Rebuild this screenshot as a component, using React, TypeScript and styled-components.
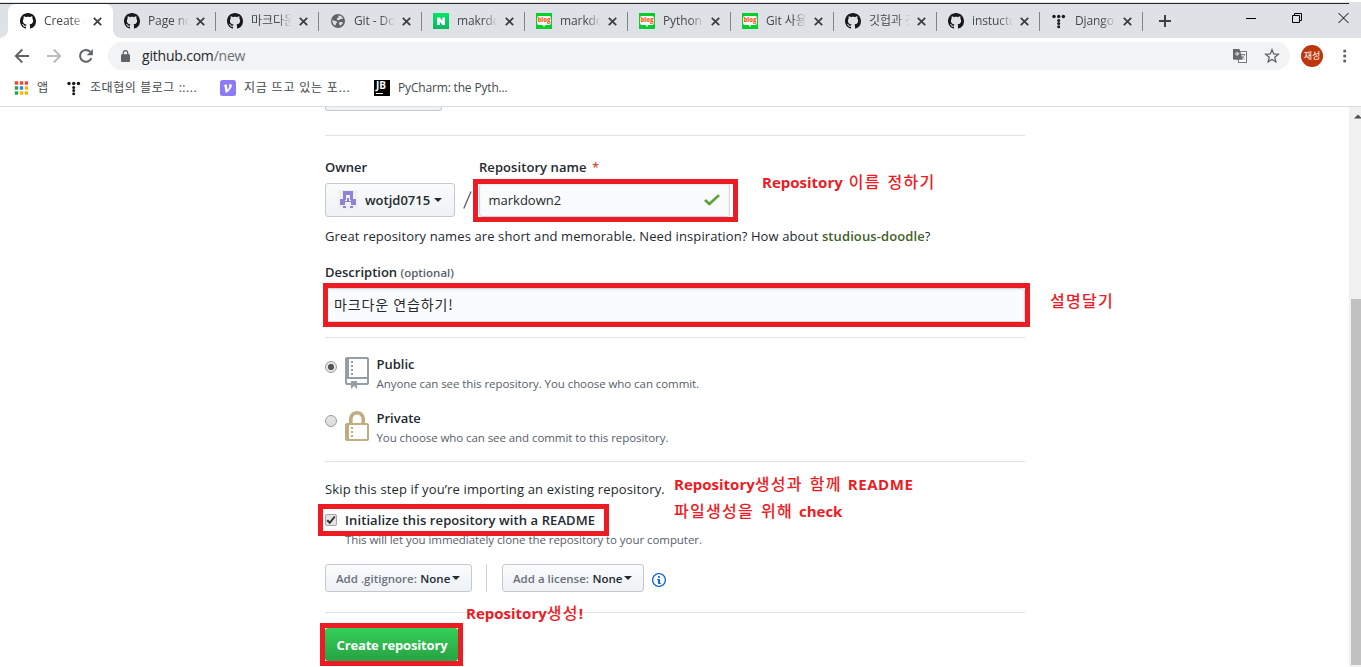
import React from "react";
import styled, { createGlobalStyle, css } from "styled-components";

const GlobalStyle = createGlobalStyle`
  * { box-sizing: border-box; }
  body {
    margin: 0;
    overflow: hidden;
    background: #fff;
    color: #24292e;
    font-family: "Open Sans", "Noto Sans CJK KR", sans-serif;
    font-size: 13px;
  }
  svg { display: block; flex: none; }
`;

/* ---------- browser chrome ---------- */

const Screen = styled.div`
  display: flex;
  flex-direction: column;
  width: 1361px;
  height: 667px;
  overflow: hidden;
`;

const WindowEdge = styled.div`
  flex: none;
  height: 4px;
  display: flex;
  align-items: flex-end;
  background: linear-gradient(#fff 0 2px, #dee1e6 2px);
  &::after {
    content: "";
    width: 1349px;
    height: 1px;
    background: #23272b;
  }
`;

const TabStrip = styled.div`
  flex: none;
  display: flex;
  height: 34px;
  padding-left: 8px;
  background: #dee1e6;
`;

const Tab = styled.div<{ $active?: boolean; $divider?: boolean }>`
  position: relative;
  display: flex;
  align-items: center;
  width: ${(p) => (p.$active ? 105 : 103)}px;
  padding: 0 8px 0 ${(p) => (p.$active ? 12 : 11)}px;
  ${(p) =>
    p.$active &&
    css`
      background: #fff;
      border-radius: 8px 8px 0 0;
      &::before,
      &::after {
        content: "";
        position: absolute;
        bottom: 0;
        width: 8px;
        height: 8px;
      }
      &::before {
        left: -8px;
        background: radial-gradient(circle at 0 0, transparent 7.5px, #fff 8px);
      }
      &::after {
        right: -8px;
        background: radial-gradient(circle at 100% 0, transparent 7.5px, #fff 8px);
      }
    `}
  ${(p) =>
    p.$divider &&
    css`
      background: linear-gradient(#808388, #808388) no-repeat right 8px / 1px 19px;
    `}
`;

const TabTitle = styled.span`
  flex: 1;
  margin-left: 8px;
  overflow: hidden;
  white-space: nowrap;
  font-size: 12px;
  line-height: 18px;
  letter-spacing: -0.1px;
  color: #45494d;
  mask-image: linear-gradient(90deg, #000 65%, transparent 100%);
`;

const TabClose = styled.span`
  display: flex;
  justify-content: center;
  flex: none;
  width: 16px;
  margin-left: 3px;
`;

const NewTab = styled.div`
  display: flex;
  align-items: center;
  margin-left: 16px;
`;

const WindowButtons = styled.div`
  display: flex;
  gap: 36px;
  margin: 9px 12px 0 auto;
`;

const Toolbar = styled.div`
  flex: none;
  display: flex;
  align-items: center;
  height: 36px;
  padding: 0 10px 0 14px;
`;

const NavButtons = styled.div`
  display: flex;
  gap: 16px;
  width: 94px;
`;

const Omnibox = styled.div`
  display: flex;
  align-items: center;
  width: 1182px;
  height: 28px;
  padding: 0 10px 0 13px;
  border-radius: 14px;
  background: #f1f3f4;
`;

const Url = styled.span`
  flex: 1;
  margin-left: 12px;
  font-size: 14px;
  line-height: 20px;
  letter-spacing: -0.2px;
  color: #25282b;
  span { color: #6c7074; }
`;

const OmniIcons = styled.div`
  display: flex;
  align-items: center;
  gap: 16px;
`;

const Avatar = styled.div`
  display: flex;
  align-items: center;
  justify-content: center;
  width: 22px;
  height: 22px;
  margin: 0 20px 0 11px;
  border-radius: 50%;
  background: #bf360c;
  color: #fff;
  font: 9px/12px "Noto Sans CJK KR", sans-serif;
`;

const Bookmarks = styled.div`
  flex: none;
  display: flex;
  align-items: center;
  height: 33px;
  padding: 0 0 5px 13px;
  border-bottom: 1px solid #dadce0;
`;

const BookmarkIcon = styled.span`
  display: flex;
  align-items: center;
  justify-content: center;
  width: 16px;
  height: 16px;
`;

const Bookmark = styled.div<{ $width: number; $ls?: number }>`
  display: flex;
  align-items: center;
  gap: 8px;
  width: ${(p) => p.$width}px;
  white-space: nowrap;
  font-size: 12px;
  line-height: 18px;
  letter-spacing: ${(p) => p.$ls ?? 0}px;
  color: #45494d;
`;

const JetBrains = styled.span`
  display: block;
  position: relative;
  width: 16px;
  height: 16px;
  padding-left: 2px;
  background: #000;
  color: #fff;
  font: bold 10px/11px "Open Sans", sans-serif;
  letter-spacing: 0;
  &::after {
    content: "";
    position: absolute;
    left: 2px;
    bottom: 2px;
    width: 7px;
    height: 1px;
    background: #fff;
  }
`;

const BlogMark = styled.span`
  display: flex;
  align-items: flex-start;
  justify-content: center;
  flex: none;
  position: relative;
  width: 16px;
  height: 16px;
  padding-top: 3px;
  background: #04cf2e;
  &::after {
    content: "";
    position: absolute;
    left: 6px;
    top: 11px;
    border: 2px solid transparent;
    border-top: 3px solid #fff;
  }
`;

const BlogBubble = styled.span`
  display: flex;
  justify-content: center;
  width: 14px;
  height: 9px;
  border-radius: 2px;
  background: #fff;
  color: #f4621f;
  font: 800 6px/8px "Open Sans", sans-serif;
  letter-spacing: -0.1px;
`;

/* ---------- page ---------- */

const Viewport = styled.div`
  flex: 1;
  display: flex;
  min-height: 0;
`;

const Page = styled.main`
  flex: 1;
  padding-left: 325px;
`;

const Form = styled.div`
  width: 700px;
`;

const Scrollbar = styled.div`
  width: 12px;
  padding: 7px 0 2px 2px;
  background: #f1f1f1;
  display: flex;
  flex-direction: column;
  justify-content: space-between;
  overflow: hidden;
`;

const Thumb = styled.div`
  height: 366px;
  background: #c1c1c1;
`;

const buttonFace = css`
  border: 1px solid #c5c9cd;
  border-radius: 3px;
  background: linear-gradient(#fafbfc, #eff3f6 90%);
`;

const TemplateButton = styled.div`
  width: 117px;
  height: 4px;
  ${buttonFace}
  border-top: 0;
  border-radius: 0 0 3px 3px;
  background: #eff3f6;
`;

const Rule = styled.div<{ $top: number }>`
  height: 1px;
  margin-top: ${(p) => p.$top}px;
  background: #dfe2e5;
`;

const Line = styled.div<{ $top?: number; $ls?: number; $small?: boolean }>`
  margin-top: ${(p) => p.$top ?? 0}px;
  height: 20px;
  line-height: 20px;
  white-space: nowrap;
  font-size: ${(p) => (p.$small ? 11.5 : 13)}px;
  letter-spacing: ${(p) => p.$ls ?? (p.$small ? -0.07 : 0)}px;
  color: ${(p) => (p.$small ? "#586069" : "#24292e")};
`;

const Strong = styled.span<{ $color?: string }>`
  font-weight: 600;
  color: ${(p) => p.$color ?? "inherit"};
`;

const Required = styled.span`
  margin-left: 2px;
  font-weight: 600;
  color: #cb4b4b;
`;

const Optional = styled.span`
  font-size: 11.5px;
  font-weight: 600;
  color: #586069;
`;

const NameRow = styled.div`
  display: flex;
  margin-top: 21px;
`;

const Column = styled.div<{ $width: number }>`
  width: ${(p) => p.$width}px;
`;

const Marked = styled.div<{ $inset: string }>`
  display: flow-root;
  position: relative;
  &::after {
    content: "";
    position: absolute;
    inset: ${(p) => p.$inset};
    border: 5px solid #ed1c24;
  }
`;

const Note = styled.div<{ $left: number; $top: number }>`
  position: absolute;
  left: ${(p) => p.$left}px;
  top: ${(p) => p.$top}px;
  white-space: nowrap;
  font-size: 15px;
  font-weight: 700;
  line-height: 27px;
  word-spacing: 2px;
  color: #ed1c24;
`;

const NoteLine = styled.div`
  height: 27px;
`;

const NoteKo = styled.span`
  font-family: "Noto Sans CJK KR", sans-serif;
  font-size: 16px;
  font-weight: 500;
  line-height: 20px;
  letter-spacing: 1.3px;
`;

const Caps = styled.span`
  letter-spacing: 0.6px;
`;

const OwnerButton = styled.div`
  display: flex;
  align-items: center;
  width: 130px;
  height: 34px;
  margin-top: 6px;
  padding-left: 12px;
  ${buttonFace}
  font-weight: 600;
`;

const OwnerName = styled.span`
  margin: 0 4px 0 7px;
  font-size: 13px;
`;

const Caret = styled.span`
  border: 4px solid transparent;
  border-top-color: #24292e;
  border-bottom: 0;
`;

const Slash = styled.div`
  width: 24px;
  padding: 34px 0 0 8px;
`;

const Spacer = styled.div`
  height: 6px;
`;

const Input = styled.div<{ $width: number; $pad: number }>`
  display: flex;
  align-items: center;
  justify-content: space-between;
  width: ${(p) => p.$width}px;
  height: 34px;
  padding: 0 9px 0 ${(p) => p.$pad}px;
  border: 1px solid #d1d5da;
  border-radius: 3px;
  background: #fafbfc;
  box-shadow: inset 0 1px 2px rgba(27, 31, 35, 0.075);
`;

const KoreanValue = styled.span`
  padding-bottom: 3px;
  font-family: "Noto Sans CJK KR", sans-serif;
  font-size: 14px;
  line-height: 20px;
  letter-spacing: 0.9px;
`;

const Choice = styled.div<{ $top: number }>`
  display: flex;
  margin-top: ${(p) => p.$top}px;
  height: 34px;
`;

const Radio = styled.span<{ $on?: boolean }>`
  width: 12px;
  height: 12px;
  margin: 4px 8px 0 0;
  border: 1px solid #9b9b9b;
  border-radius: 50%;
  background: ${(p) =>
    p.$on
      ? "radial-gradient(circle, #555 0 2.8px, #e6e6e6 3.4px)"
      : "linear-gradient(#e6e6e6, #dcdcdc)"};
`;

const ChoiceText = styled.div`
  margin: -3px 0 0 7.5px;
`;

const CheckRow = styled.div`
  display: flex;
  align-items: center;
  gap: 8px;
  height: 20px;
  margin-top: 11px;
  letter-spacing: 0.1px;
`;

const Checkbox = styled.span`
  display: flex;
  align-items: center;
  justify-content: center;
  width: 12px;
  height: 12px;
  border: 1px solid #a6a6a6;
  border-radius: 2px;
  background: #e4e4e4;
`;

const Hint = styled.div`
  padding-left: 20px;
`;

const SelectRow = styled.div`
  display: flex;
  align-items: center;
  margin-top: 14px;
  height: 28px;
`;

const Select = styled.div<{ $width: number }>`
  display: flex;
  align-items: center;
  width: ${(p) => p.$width}px;
  height: 28px;
  padding-left: 10px;
  ${buttonFace}
  font-size: 11.5px;
  font-weight: 600;
  color: #6a7179;
  white-space: nowrap;
  b { margin: 0 2px 0 3.5px; font-weight: 600; color: #24292e; }
`;

const Separator = styled.div`
  width: 1px;
  height: 28px;
  margin: 0 15px 0 14px;
  background: #cfd3d7;
`;

const Info = styled.svg`
  margin: 4px 0 0 8px;
`;

const Submit = styled.div`
  width: 133px;
  height: 33px;
  margin-top: 15px;
  padding-left: 1px;
  border-radius: 3px;
  background: linear-gradient(#34d058, #28a745 90%);
  color: #fff;
  font-size: 13px;
  font-weight: 700;
  line-height: 34px;
  letter-spacing: -0.17px;
  text-align: center;
`;

/* ---------- icons ---------- */

const GitHubIcon = () => (
  <svg width="16" height="16" viewBox="0 0 16 16" fill="#191717">
    <path d="M8 0C3.58 0 0 3.58 0 8c0 3.54 2.29 6.53 5.47 7.59.4.07.55-.17.55-.38 0-.19-.01-.82-.01-1.49-2.01.37-2.53-.49-2.69-.94-.09-.23-.48-.94-.82-1.13-.28-.15-.68-.52-.01-.53.63-.01 1.08.58 1.23.82.72 1.21 1.87.87 2.33.66.07-.52.28-.87.51-1.07-1.78-.2-3.64-.89-3.64-3.95 0-.87.31-1.59.82-2.15-.08-.2-.36-1.02.08-2.12 0 0 .67-.21 2.2.82.64-.18 1.32-.27 2-.27s1.36.09 2 .27c1.53-1.04 2.2-.82 2.2-.82.44 1.1.16 1.92.08 2.12.51.56.82 1.27.82 2.15 0 3.07-1.87 3.75-3.65 3.95.29.25.54.73.54 1.48 0 1.07-.01 1.93-.01 2.2 0 .21.15.46.55.38A8.01 8.01 0 0 0 16 8c0-4.42-3.58-8-8-8z" />
  </svg>
);

const GlobeIcon = () => (
  <svg width="16" height="16" viewBox="0 0 16 16">
    <circle cx="8" cy="8" r="7" fill="#5f6368" />
    <path
      d="M2.300 7c1.200.2 2 1 3.200 1.100 1 .1 1.700.6 1.500 1.500-.2.7-1 .8-1.200 1.500-.1.600-.1 1.300-.6 1.600C3.400 11.600 2.200 9.500 2.300 7zM8.500 2.600c2 .1 3.700 1.200 4.600 3-.8.600-1.700.2-2.500.5-.9.4-1.300 1.300-2.300 1.200-.9-.1-1.700-.7-1.500-1.500.2-.8 1.300-.6 1.700-1.300.3-.6-.4-1.300 0-1.900zM9.500 9.300c1-.6 2.600-.5 3.500.3-.5 1.300-1.500 2.500-2.900 3.100-.7-.9-1.600-2.500-.6-3.400z"
      fill="#dee1e6"
    />
  </svg>
);

const NaverIcon = () => (
  <svg width="16" height="16" viewBox="0 0 16 16">
    <defs>
      <linearGradient id="naver" x1="0" y1="0" x2="0" y2="1">
        <stop offset="0" stopColor="#00e765" />
        <stop offset="1" stopColor="#0bb463" />
      </linearGradient>
    </defs>
    <rect width="16" height="16" fill="url(#naver)" />
    <path d="M4 4.500h2.900l2.400 3.300V4.500H12V12H9.300L6.800 8.600V12H4z" fill="#fff" />
  </svg>
);

const BlogIcon = () => (
  <BlogMark>
    <BlogBubble>blog</BlogBubble>
  </BlogMark>
);

const DotsIcon = () => (
  <svg width="16" height="16" viewBox="0 0 16 16" fill="#1a1a1a">
    {[3.3, 8, 12.7].map((x) => (
      <circle key={x} cx={x - 0.3} cy="3.500" r="1.700" />
    ))}
    <circle cx="7.700" cy="7.400" r="1.500" />
    <circle cx="7.700" cy="10.600" r="1.500" />
    <circle cx="7.700" cy="13.700" r="1.500" />
  </svg>
);

const CloseIcon = () => (
  <svg width="9" height="9" viewBox="0 0 9 9" stroke="#3c4043" strokeWidth="1.800">
    <path d="M.8.8l7.400 7.400M8.200.8L.8 8.200" />
  </svg>
);

const appColors = ["#f44336", "#f44336", "#f44336", "#2ba24c", "#1e88e5", "#fbb300", "#2ba24c", "#fbb300", "#fbb300"];

const AppsIcon = () => (
  <svg width="14" height="14" viewBox="0 0 14 14">
    {appColors.map((c, i) => (
      <rect key={i} x={(i % 3) * 5 + 0.8} y={Math.floor(i / 3) * 5 + 0.3} width="3.400" height="3.400" fill={c} />
    ))}
  </svg>
);

const VIcon = () => (
  <svg width="16" height="16" viewBox="0 0 16 16">
    <rect width="16" height="16" rx="2.500" fill="#8b7cf6" />
    <path
      d="M3.800 5.200l3-.9.8 5.500c1.200-1.500 2.100-2.900 1.700-3.600-.3-.4-.6-.5-.5-1 .2-.8 2-1.200 2.800-.4 1.200 1.600-1.700 5.200-4.600 7.700H5.500L4.600 6.200l-.8-.1z"
      fill="#fff"
    />
  </svg>
);

const IdenticonIcon = () => (
  <svg width="20" height="20" viewBox="0 0 20 20" shapeRendering="crispEdges">
    <rect width="20" height="20" fill="#f0f0f0" />
    <g fill="#9083d6">
      <rect x="5" y="1" width="10" height="4" />
      <rect x="5" y="5" width="3" height="5" />
      <rect x="12" y="5" width="3" height="5" />
      <rect x="9" y="8" width="2" height="3" />
      <rect x="2" y="9" width="5" height="6" />
      <rect x="13" y="9" width="5" height="6" />
      <rect x="7" y="11" width="6" height="1" />
      <rect x="5" y="16" width="3" height="2" />
      <rect x="12" y="16" width="3" height="2" />
    </g>
  </svg>
);

const tabs: { title: string; Icon: React.FC }[] = [
  { title: "Create a New", Icon: GitHubIcon },
  { title: "Page not found", Icon: GitHubIcon },
  { title: "마크다운 사용", Icon: GitHubIcon },
  { title: "Git - Downloads", Icon: GlobeIcon },
  { title: "makrdown", Icon: NaverIcon },
  { title: "markdown", Icon: BlogIcon },
  { title: "Python -", Icon: BlogIcon },
  { title: "Git 사용법", Icon: BlogIcon },
  { title: "깃헙과 깃", Icon: GitHubIcon },
  { title: "instuctor", Icon: GitHubIcon },
  { title: "Django -", Icon: DotsIcon },
];

export default function App() {
  return (
    <Screen>
      <GlobalStyle />
      <WindowEdge />
      <TabStrip>
        {tabs.map(({ title, Icon }, i) => (
          <Tab key={i} $active={i === 0} $divider={i > 0}>
            <Icon />
            <TabTitle>{title}</TabTitle>
            <TabClose>
              <CloseIcon />
            </TabClose>
          </Tab>
        ))}
        <NewTab>
          <svg width="12" height="12" viewBox="0 0 12 12" stroke="#3c4043" strokeWidth="2">
            <path d="M6 0v12M0 6h12" />
          </svg>
        </NewTab>
        <WindowButtons>
          <svg width="10" height="10" viewBox="0 0 10 10" fill="#000">
            <rect y="5" width="10" height="1" />
          </svg>
          <svg width="10" height="10" viewBox="0 0 10 10" fill="none" stroke="#000">
            <path d="M.5 2.500h7v7h-7zM2.500 2.500v-2h7v7h-2" />
          </svg>
          <svg width="11" height="10" viewBox="0 0 11 10" stroke="#000">
            <path d="M.5 0l10 10M10.500 0L.5 10" />
          </svg>
        </WindowButtons>
      </TabStrip>

      <Toolbar>
        <NavButtons>
          <svg width="16" height="16" viewBox="0 0 16 16" fill="none" stroke="#5f6368" strokeWidth="1.900">
            <path d="M15 8H2.500M8.300 1.500L1.800 8l6.500 6.500" />
          </svg>
          <svg width="16" height="16" viewBox="0 0 16 16" fill="none" stroke="#babcbe" strokeWidth="1.900">
            <path d="M1 8h12.500M7.700 1.500L14.200 8l-6.500 6.500" />
          </svg>
          <svg width="16" height="16" viewBox="0 0 16 16" fill="none" stroke="#5f6368" strokeWidth="2">
            <path d="M13.400 10.200A5.900 5.900 0 1 1 12.300 3.900" />
            <path d="M14.900 1v6.200H8.700z" fill="#5f6368" stroke="none" />
          </svg>
        </NavButtons>
        <Omnibox>
          <svg width="9" height="12" viewBox="0 0 9 12">
            <rect y="4.300" width="9" height="7.700" rx="1" fill="#5f6368" />
            <path d="M2.200 5V3a2.300 2.300 0 0 1 4.600 0v2" fill="none" stroke="#5f6368" strokeWidth="1.200" />
          </svg>
          <Url>
            github.com<span>/new</span>
          </Url>
          <OmniIcons>
            <svg width="16" height="16" viewBox="0 0 16 16">
              <rect x="6.500" y="3.500" width="8" height="11" fill="#f8f9fa" stroke="#787b7f" />
              <path d="M1 1h6.500l3.300 10.800H2A1 1 0 0 1 1 10.800z" fill="#66696e" />
              <path d="M7.400 5.300H5.200v1.100h1a1.300 1.300 0 1 1-.3-1.400" fill="none" stroke="#f1f3f4" strokeWidth=".9" />
              <path d="M8.800 6.500h4.600M11 5.500v1M12.500 6.800c-.4 1.600-1.400 3-2.700 3.900M9.700 7.500c.5 1.300 1.500 2.500 3 3.500" fill="none" stroke="#787b7f" strokeWidth=".9" />
            </svg>
            <svg width="16" height="16" viewBox="0 0 16 16" fill="none" stroke="#5f6368" strokeWidth="1.300">
              <path d="M8 1.700l1.700 4.200 4.600.4-3.500 3 1.100 4.500L8 11.400l-3.900 2.400 1.100-4.500-3.500-3 4.600-.4z" />
            </svg>
          </OmniIcons>
        </Omnibox>
        <Avatar>재성</Avatar>
        <svg width="4" height="14" viewBox="0 0 4 14" fill="#5f6368">
          <circle cx="1.700" cy="2" r="1.600" />
          <circle cx="1.700" cy="7" r="1.600" />
          <circle cx="1.700" cy="12" r="1.600" />
        </svg>
      </Toolbar>

      <Bookmarks>
        <Bookmark $width={53}>
          <BookmarkIcon>
            <AppsIcon />
          </BookmarkIcon>
          앱
        </Bookmark>
        <Bookmark $width={154} $ls={0.57}>
          <BookmarkIcon>
            <DotsIcon />
          </BookmarkIcon>
          조대협의 블로그 ::...
        </Bookmark>
        <Bookmark $width={154} $ls={0.8}>
          <BookmarkIcon>
            <VIcon />
          </BookmarkIcon>
          지금 뜨고 있는 포...
        </Bookmark>
        <Bookmark $width={150} $ls={-0.17}>
          <JetBrains>JB</JetBrains>
          PyCharm: the Pyth...
        </Bookmark>
      </Bookmarks>

      <Viewport>
        <Page>
          <Form>
            <TemplateButton />
            <Rule $top={24} />
            <NameRow>
              <Column $width={130}>
                <Line>
                  <Strong>Owner</Strong>
                </Line>
                <OwnerButton>
                  <IdenticonIcon />
                  <OwnerName>wotjd0715</OwnerName>
                  <Caret />
                </OwnerButton>
              </Column>
              <Slash>
                <svg width="9" height="18" viewBox="0 0 9 18" stroke="#586069" strokeWidth="1.300">
                  <path d="M.8 17.500L8 .5" />
                </svg>
              </Slash>
              <Column $width={260}>
                <Line $ls={0.07}>
                  <Strong>Repository name</Strong> <Required>*</Required>
                </Line>
                <Marked $inset="2px 1px -5px -6px">
                  <Spacer />
                  <Input $width={251} $pad={8.5}>
                    markdown2
                    <svg width="16" height="14" viewBox="0 2.500 12 11.500" fill="#55a532" preserveAspectRatio="none">
                      <path d="M12 5l-8 8-4-4 1.500-1.500L4 10l6.500-6.500L12 5z" />
                    </svg>
                  </Input>
                  <Note $left={283} $top={-8}>
                    Repository <NoteKo>이름 정하기</NoteKo>
                  </Note>
                </Marked>
              </Column>
            </NameRow>
            <Line $top={9} $ls={0.11}>
              Great repository names are short and memorable. Need inspiration? How about{" "}
              <Strong $color="#3f5f26">studious-doodle</Strong>?
            </Line>
            <Line $top={16}>
              <Strong>Description</Strong> <Optional>(optional)</Optional>
            </Line>
            <Marked $inset="1px -5px -5px -2px">
              <Spacer />
              <Input $width={700} $pad={8}>
                <KoreanValue>마크다운 연습하기!</KoreanValue>
              </Input>
              <Note $left={725} $top={6}>
                <NoteKo>설명달기</NoteKo>
              </Note>
            </Marked>
            <Rule $top={15} />
            <Choice $top={19}>
              <Radio $on />
              <svg width="24" height="32" viewBox="0 0 12 16" fill="#959da5">
                <path d="M4 9H3V8h1v1zm0-3H3v1h1V6zm0-2H3v1h1V4zm0-2H3v1h1V2zm8-1v12c0 .55-.45 1-1 1H6v2l-1.500-1.500L3 16v-2H1c-.55 0-1-.45-1-1V1c0-.55.45-1 1-1h10c.55 0 1 .45 1 1zm-1 10H1v2h2v-1h3v1h5v-2zm0-10H2v9h9V1z" />
              </svg>
              <ChoiceText>
                <Line>
                  <Strong>Public</Strong>
                </Line>
                <Line $small>Anyone can see this repository. You choose who can commit.</Line>
              </ChoiceText>
            </Choice>
            <Choice $top={20}>
              <Radio />
              <svg width="24" height="32" viewBox="0 0 12 16" fill="#bfac80">
                <path d="M4 13H3v-1h1v1zm8-6v7c0 .55-.45 1-1 1H1c-.55 0-1-.45-1-1V7c0-.55.45-1 1-1h1V4c0-2.200 1.800-4 4-4s4 1.800 4 4v2h1c.55 0 1 .45 1 1zM3.800 6h4.410V4c0-1.220-.98-2.200-2.200-2.200-1.220 0-2.200.98-2.200 2.200v2H3.800zM11 7H2v7h9V7zM4 8H3v1h1V8zm0 2H3v1h1v-1z" />
              </svg>
              <ChoiceText>
                <Line>
                  <Strong>Private</Strong>
                </Line>
                <Line $small>You choose who can see and commit to this repository.</Line>
              </ChoiceText>
            </Choice>
            <Rule $top={16} />
            <Marked $inset="42px 416px -6px -7px">
              <Line $top={17} $ls={0.14}>
                Skip this step if you’re importing an existing repository.
              </Line>
              <CheckRow>
                <Checkbox>
                  <svg width="10" height="10" viewBox="0 0 10 10" fill="none" stroke="#333" strokeWidth="2">
                    <path d="M1.200 5.200l2.600 2.600L8.800 1.500" />
                  </svg>
                </Checkbox>
                <Strong>Initialize this repository with a README</Strong>
              </CheckRow>
              <Note $left={349} $top={9}>
                <NoteLine>
                  Repository<NoteKo>생성과 함께</NoteKo> <Caps>README</Caps>
                </NoteLine>
                <NoteLine>
                  <NoteKo>파일생성을 위해</NoteKo> check
                </NoteLine>
              </Note>
            </Marked>
            <Hint>
              <Line $small $ls={-0.06}>
                This will let you immediately clone the repository to your computer.
              </Line>
            </Hint>
            <SelectRow>
              <Select $width={147}>
                Add .gitignore: <b>None</b> <Caret />
              </Select>
              <Separator />
              <Select $width={142}>
                Add a license: <b>None</b> <Caret />
              </Select>
              <Info width="14" height="16" viewBox="0 0 14 16" fill="#0366d6">
                <path d="M6.300 5.690a.942.942 0 0 1-.28-.7c0-.28.09-.52.28-.7.19-.18.42-.28.7-.28.28 0 .52.09.7.28.18.19.28.42.28.7 0 .28-.09.52-.28.7a1 1 0 0 1-.7.3c-.28 0-.52-.11-.7-.3zM8 7.990c-.02-.25-.11-.48-.31-.69-.2-.19-.42-.3-.69-.31H6c-.27.02-.48.13-.69.31-.2.2-.3.44-.31.69h1v3c.02.27.11.5.31.69.2.2.42.31.69.31h1c.27 0 .48-.11.69-.31.2-.19.3-.42.31-.69H8V7.980v.01zM7 2.300c-3.140 0-5.700 2.540-5.700 5.680 0 3.140 2.560 5.700 5.700 5.700s5.700-2.550 5.700-5.700c0-3.150-2.560-5.690-5.700-5.690v.01zM7 .98c3.860 0 7 3.140 7 7s-3.140 7-7 7-7-3.120-7-7 3.140-7 7-7z" />
              </Info>
            </SelectRow>
            <Rule $top={20} />
            <Marked $inset="10px 562px -5px -5px">
              <Submit>Create repository</Submit>
              <Note $left={141} $top={-13}>
                Repository<NoteKo>생성</NoteKo>!
              </Note>
            </Marked>
          </Form>
        </Page>
        <Scrollbar>
          <svg width="10" height="5" viewBox="0 0 10 5" fill="#505050">
            <path d="M3 4.500L7 .5l4 4z" />
          </svg>
          <Thumb />
        </Scrollbar>
      </Viewport>
    </Screen>
  );
}
